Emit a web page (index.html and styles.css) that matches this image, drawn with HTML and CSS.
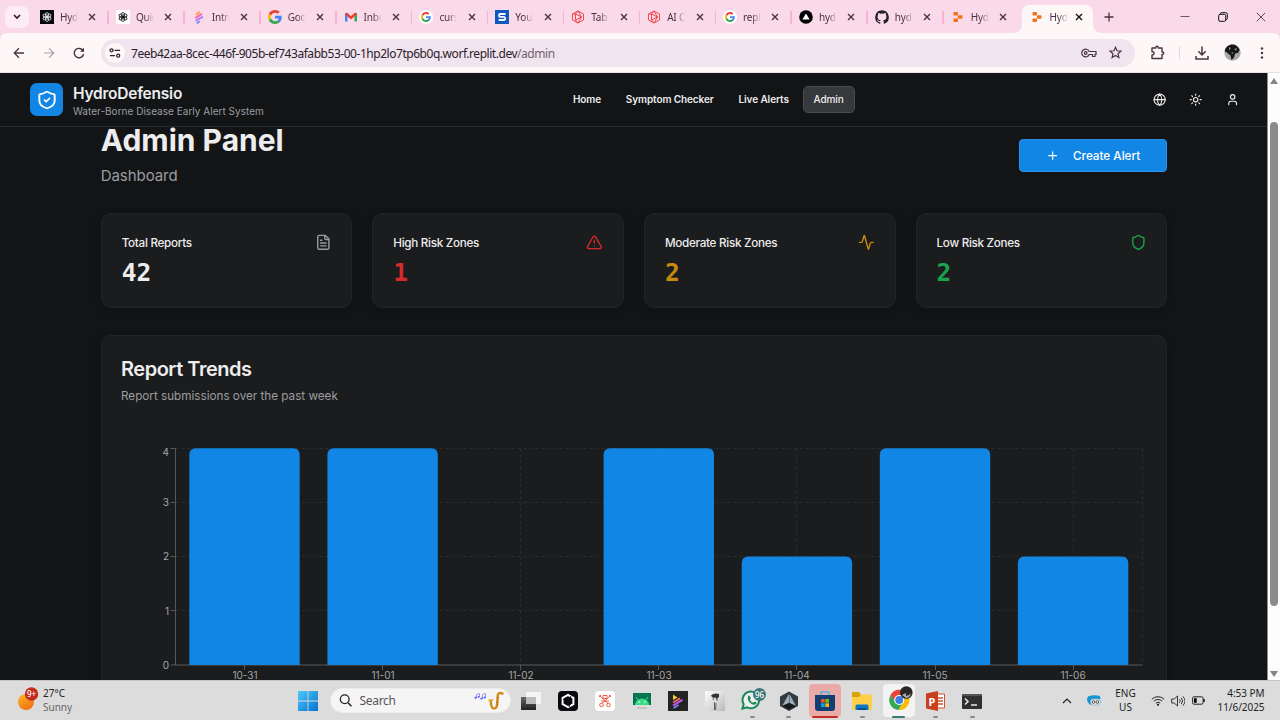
FILE: index.html
```
<!DOCTYPE html>
<html lang="en">
<head>
<meta charset="utf-8">
<title>HydroDefensio</title>
<link rel="stylesheet" href="styles.css">
</head>
<body>
<svg class="defs" width="0" height="0" aria-hidden="true">
  <defs>
    <symbol id="x" viewBox="0 0 8 8"><path d="M1 1l6 6M7 1L1 7" fill="none" stroke="currentColor" stroke-width="1.4"/></symbol>
    <symbol id="google" viewBox="0 0 48 48"><path fill="#ea4335" d="M24 9.500c3.500 0 6.700 1.200 9.200 3.600l6.900-6.900C35.900 2.400 30.500 0 24 0 14.600 0 6.500 5.400 2.600 13.200l8 6.200C12.400 13.700 17.700 9.500 24 9.500z"/><path fill="#4285f4" d="M47 24.600c0-1.600-.2-3.100-.4-4.600H24v9h12.900c-.6 3-2.300 5.500-4.800 7.200l7.700 6C44.400 38 47 31.800 47 24.600z"/><path fill="#fbbc05" d="M10.500 28.600c-.5-1.500-.8-3-.8-4.600s.3-3.100.8-4.600l-8-6.200C.9 16.500 0 20.100 0 24s.9 7.500 2.600 10.800z"/><path fill="#34a853" d="M24 48c6.500 0 11.900-2.100 15.900-5.800l-7.700-6c-2.200 1.500-4.900 2.300-8.200 2.300-6.300 0-11.600-4.200-13.500-9.900l-8 6.200C6.500 42.600 14.600 48 24 48z"/></symbol>
    <symbol id="knot" viewBox="0 0 16 16"><g fill="none" stroke="currentColor" stroke-width=".9"><ellipse cx="8" cy="5.500" rx="1.900" ry="2.600"/><ellipse cx="8" cy="5.500" rx="1.900" ry="2.600" transform="rotate(60 8 8)"/><ellipse cx="8" cy="5.500" rx="1.900" ry="2.600" transform="rotate(120 8 8)"/><ellipse cx="8" cy="5.500" rx="1.900" ry="2.600" transform="rotate(180 8 8)"/><ellipse cx="8" cy="5.500" rx="1.900" ry="2.600" transform="rotate(240 8 8)"/><ellipse cx="8" cy="5.500" rx="1.900" ry="2.600" transform="rotate(300 8 8)"/></g></symbol>
    <symbol id="stripes" viewBox="0 0 14 14"><g fill="none" stroke-linecap="round" stroke-width="2"><path stroke="#f9a43a" d="M4.500 4.200L7 2.400"/><path stroke="#ee6db0" d="M4 7.700l5.500-3.500"/><path stroke="#a978ff" d="M4.300 10.500l6-3.500"/><path stroke="#7b8cff" d="M5.500 12.800l1.500-1"/></g></symbol>
    <symbol id="hexplay" viewBox="0 0 14 14"><path fill="none" stroke="#f0484f" stroke-width="1" stroke-linejoin="round" d="M7 1l5.500 3v6L7 13l-5.500-3V4zM4.500 4v6l6-3zM1.500 4l3 0M7 1l3.500 6M7 13l3.500-6M4.500 10L7 13M4.500 4L7 1"/></symbol>
    <symbol id="replit" viewBox="0 0 14 14"><g fill="#f2711c"><rect x="2.500" y="2" width="4.500" height="3.400" rx=".7"/><rect x="6.800" y="5.300" width="4.700" height="3.400" rx=".7"/><rect x="2.500" y="8.600" width="4.500" height="3.400" rx=".7"/></g></symbol>
  </defs>
</svg>

<div class="screen">
  <div class="tabstrip">
    <div class="tab-search"><svg width="8" height="6" viewBox="0 0 8 6"><path d="M1 1l3 3 3-3" fill="none" stroke="#2a1c25" stroke-width="1.600"/></svg></div>
    <div class="tab"><span class="fav black"><svg><use href="#knot"/></svg></span><span class="label">Hyd</span><svg class="close"><use href="#x"/></svg></div>
    <div class="tab"><span class="fav white"><svg><use href="#knot"/></svg></span><span class="label">Quic</span><svg class="close"><use href="#x"/></svg></div>
    <div class="tab"><span class="fav"><svg><use href="#stripes"/></svg></span><span class="label">Intro</span><svg class="close"><use href="#x"/></svg></div>
    <div class="tab"><span class="fav"><svg><use href="#google"/></svg></span><span class="label">Goo</span><svg class="close"><use href="#x"/></svg></div>
    <div class="tab"><span class="fav"><svg viewBox="0 0 14 14"><path fill="#4285f4" d="M1 3h2.500v8.500H1z"/><path fill="#34a853" d="M10.500 3H13v8.500h-2.500z"/><path d="M2 3.500l5 4.200 5-4.200" fill="none" stroke="#ea4335" stroke-width="2.600"/></svg></span><span class="label">Inbo</span><svg class="close"><use href="#x"/></svg></div>
    <div class="tab"><span class="fav disc"><svg><use href="#google"/></svg></span><span class="label">curs</span><svg class="close"><use href="#x"/></svg></div>
    <div class="tab"><span class="fav"><svg viewBox="0 0 14 14"><path fill="#1159bd" d="M0 0h14v14H0z"/><path d="M10.500 4H5.300Q4 4 4 5.400T5.300 6.900h3.500Q10.200 6.900 10.200 8.500T8.800 10H3.700" fill="none" stroke="#fff" stroke-width="1.800"/></svg></span><span class="label">You</span><svg class="close"><use href="#x"/></svg></div>
    <div class="tab"><span class="fav"><svg><use href="#hexplay"/></svg></span><span class="label">Tabs</span><svg class="close"><use href="#x"/></svg></div>
    <div class="tab"><span class="fav"><svg><use href="#hexplay"/></svg></span><span class="label">AI C</span><svg class="close"><use href="#x"/></svg></div>
    <div class="tab"><span class="fav disc"><svg><use href="#google"/></svg></span><span class="label">repl</span><svg class="close"><use href="#x"/></svg></div>
    <div class="tab"><span class="fav"><svg viewBox="0 0 14 14"><circle cx="7" cy="7" r="6.800"/><path d="M7 3.400l3.600 6.200H3.400z" fill="#fff"/></svg></span><span class="label">hyd</span><svg class="close"><use href="#x"/></svg></div>
    <div class="tab"><span class="fav"><svg viewBox="0 0 16 16"><path fill="#24202a" d="M8 .2a8 8 0 0 0-2.500 15.500c.4.100.5-.2.500-.4v-1.500c-2.200.5-2.700-.9-2.700-.9-.4-.9-.9-1.200-.9-1.200-.7-.5.100-.5.100-.5.800.100 1.200.8 1.200.8.700 1.200 1.900.9 2.300.7.100-.5.300-.9.500-1.100-1.800-.2-3.600-.9-3.600-4 0-.9.300-1.600.8-2.100-.1-.2-.4-1 .1-2.100 0 0 .7-.2 2.200.8a7.500 7.500 0 0 1 4 0c1.500-1 2.200-.8 2.200-.8.400 1.100.2 1.900.1 2.100.5.600.8 1.300.8 2.100 0 3.100-1.900 3.700-3.700 3.900.3.300.6.800.6 1.500v2.300c0 .2.100.500.500.4A8 8 0 0 0 8 .2z"/></svg></span><span class="label">hyd</span><svg class="close"><use href="#x"/></svg></div>
    <div class="tab bare"><span class="fav"><svg><use href="#replit"/></svg></span><span class="label">Hyd</span><svg class="close"><use href="#x"/></svg></div>
    <div class="tab active"><span class="fav"><svg><use href="#replit"/></svg></span><span class="label">Hyd</span><svg class="close"><use href="#x"/></svg></div>
    <svg class="new-tab" viewBox="0 0 10 10"><path d="M5 .5v9M.5 5h9" stroke="#4a3341" stroke-width="1.300"/></svg>
    <div class="window-buttons">
      <svg viewBox="0 0 10 10"><path d="M.5 4.500h9" stroke="#6b5a64"/></svg>
      <svg viewBox="0 0 10 10"><path d="M2.500 2V1.500Q2.500.7 3.500.7h4.300q1.500 0 1.500 1.500v4.300q0 1-1 1H8" fill="none" stroke="#111"/><rect x=".7" y="2.300" width="7" height="7" rx="1.300" fill="none" stroke="#111"/></svg>
      <svg viewBox="0 0 10 10"><path d="M.8.8l8.400 8.400M9.200.8L.8 9.200" stroke="#4a3341" stroke-width=".9"/></svg>
    </div>
  </div>

  <div class="toolbar">
    <svg class="nav-icon" viewBox="0 0 12 12"><path d="M11 6H1.500M6 1.300L1.300 6 6 10.700" fill="none" stroke="#4a3341" stroke-width="1.300"/></svg>
    <svg class="nav-icon" viewBox="0 0 12 12"><path d="M1 6h9.500M6 1.300L10.700 6 6 10.700" fill="none" stroke="#a99fa5" stroke-width="1.200"/></svg>
    <svg class="nav-icon" viewBox="0 0 12 12"><path d="M10.300 4.200A4.700 4.700 0 1 0 10.600 7" fill="none" stroke="#4a3341" stroke-width="1.400"/><path d="M11 .8v4H7z" fill="#4a3341"/></svg>
    <div class="omnibox">
      <span class="site-info"><svg width="12" height="10" viewBox="0 0 12 10"><g fill="none" stroke="#33242e" stroke-width="1.300"><circle cx="2.500" cy="2.300" r="1.500"/><path d="M5.500 2.300H11M1 7.700h5"/><circle cx="9.200" cy="7.700" r="1.500"/></g></svg></span>
      <span class="url">7eeb42aa-8cec-446f-905b-ef743afabb53-00-1hp2lo7tp6b0q.worf.replit.dev<i>/admin</i></span>
      <svg class="key" viewBox="0 0 16 10"><g fill="none" stroke="#4a3341" stroke-width="1.200"><path d="M8.200 3.500H15v3h-1v2h-2.500v-2H8.200A3.900 3.900 0 1 1 8.200 3.500z"/><circle cx="4.700" cy="5" r="1.300"/></g></svg>
      <svg class="star" viewBox="0 0 12 12"><path d="M6 1.200l1.400 3.200 3.600.3-2.700 2.400.8 3.500L6 8.700l-3.100 1.900.8-3.500L1 4.700l3.600-.3z" fill="none" stroke="#4a3341" stroke-width="1.100"/></svg>
    </div>
    <svg class="puzzle" viewBox="0 0 15 15"><path d="M2 3h3.800V2.500a1.200 1.200 0 0 1 2.400 0V3H12v4h.5a1.200 1.200 0 0 1 0 2.400H12v4.100H2V10h.5a1.600 1.600 0 0 0 0-3.300H2z" fill="none" stroke="#4a3341" stroke-width="1.400" stroke-linejoin="round"/></svg>
    <span class="divider"></span>
    <svg class="download" viewBox="0 0 14 14"><path d="M7 .5v8.300M3.300 5.300L7 9l3.700-3.700M1 10v3h12v-3" fill="none" stroke="#4a3341" stroke-width="1.500"/></svg>
    <svg class="avatar" viewBox="0 0 17 17"><circle cx="8.500" cy="8.500" r="8.200" fill="#a9a9a9"/><path d="M.6 7Q2 1 8 .4q5.500 0 7.600 5.600l-1.600 3-3 .5-1 4-2.500 2.500-1-4.500-3-2.500z" fill="#161616"/><path d="M5 3l2 1-2 2.500zM10 5l3-1-1 3zM7 9l2-1v2z" fill="#8a8a8a"/></svg>
    <svg class="menu" viewBox="0 0 4 12"><g fill="#4a3341"><circle cx="2" cy="1.500" r="1.200"/><circle cx="2" cy="6" r="1.200"/><circle cx="2" cy="10.500" r="1.200"/></g></svg>
  </div>

  <div class="viewport">
    <div class="page">
      <header class="site-header">
        <div class="brand">
          <span class="logo"><svg viewBox="0 0 24 24" class="lucide"><path d="M20 13c0 5-3.500 7.500-7.660 8.950a1 1 0 0 1-.67-.01C7.500 20.500 4 18 4 13V6a1 1 0 0 1 1-1c2 0 4.500-1.200 6.240-2.720a1.170 1.170 0 0 1 1.520 0C14.510 3.810 17 5 19 5a1 1 0 0 1 1 1z" transform="matrix(1.150 0 0 1 -1.800 0)"/><path d="m9 12 2 2 4-4"/></svg></span>
          <div class="brand-text"><span class="brand-name">HydroDefensio</span><span class="brand-sub">Water-Borne Disease Early Alert System</span></div>
        </div>
        <nav class="site-nav"><a>Home</a><a>Symptom Checker</a><a>Live Alerts</a><a class="current">Admin</a></nav>
        <div class="header-icons">
          <svg class="lucide" viewBox="0 0 24 24"><circle cx="12" cy="12" r="10"/><path d="M12 2a14.500 14.500 0 0 0 0 20 14.500 14.500 0 0 0 0-20M2 12h20"/></svg>
          <svg class="lucide" viewBox="0 0 24 24"><circle cx="12" cy="12" r="4"/><path d="M12 2v2M12 20v2M4.930 4.930l1.410 1.410M17.660 17.660l1.410 1.410M2 12h2M20 12h2M6.340 17.660l-1.410 1.410M19.070 4.930l-1.410 1.410"/></svg>
          <svg class="lucide" viewBox="0 0 24 24"><path d="M19 21v-2a4 4 0 0 0-4-4H9a4 4 0 0 0-4 4v2"/><circle cx="12" cy="7" r="4"/></svg>
        </div>
      </header>
      <main>
        <div class="title-row">
          <div><h1>Admin Panel</h1><p>Dashboard</p></div>
          <button class="create"><svg class="lucide" viewBox="0 0 24 24"><path d="M5 12h14M12 5v14"/></svg><span>Create Alert</span></button>
        </div>
        <section class="stats">
          <article class="card stat"><div class="stat-head"><h3>Total Reports</h3><svg class="lucide muted" viewBox="0 0 24 24"><path d="M15 2H6a2 2 0 0 0-2 2v16a2 2 0 0 0 2 2h12a2 2 0 0 0 2-2V7zM14 2v4a2 2 0 0 0 2 2h4M10 9H8M16 13H8M16 17H8"/></svg></div><strong>42</strong></article>
          <article class="card stat red"><div class="stat-head"><h3>High Risk Zones</h3><svg class="lucide" viewBox="0 0 24 24"><path d="m21.730 18-8-14a2 2 0 0 0-3.480 0l-8 14A2 2 0 0 0 4 21h16a2 2 0 0 0 1.730-3M12 9v4M12 17h.01"/></svg></div><strong>1</strong></article>
          <article class="card stat amber"><div class="stat-head"><h3>Moderate Risk Zones</h3><svg class="lucide" viewBox="0 0 24 24"><path d="M22 12h-2.480a2 2 0 0 0-1.930 1.460l-2.350 8.360a.25.25 0 0 1-.48 0L9.240 2.180a.25.25 0 0 0-.48 0l-2.350 8.360A2 2 0 0 1 4.490 12H2"/></svg></div><strong>2</strong></article>
          <article class="card stat green"><div class="stat-head"><h3>Low Risk Zones</h3><svg class="lucide" viewBox="0 0 24 24"><path d="M20 13c0 5-3.500 7.500-7.660 8.950a1 1 0 0 1-.67-.01C7.500 20.500 4 18 4 13V6a1 1 0 0 1 1-1c2 0 4.500-1.200 6.240-2.720a1.170 1.170 0 0 1 1.520 0C14.510 3.810 17 5 19 5a1 1 0 0 1 1 1z"/></svg></div><strong>2</strong></article>
        </section>
        <section class="card trends">
          <h2>Report Trends</h2>
          <p>Report submissions over the past week</p>
          <svg class="chart" viewBox="0 0 1026 260" width="1026" height="260">
            <g class="grid"><path d="M54.500 18.500H1021.500M54.500 72.500H1021.500M54.500 126.500H1021.500M54.500 180.500H1021.500M123.500 18.500V235M261.500 18.500V235M399.500 18.500V235M537.500 18.500V235M675.500 18.500V235M814.500 18.500V235M952.500 18.500V235M1021.500 18.500V235"/></g>
            <g class="axis"><path d="M54.500 18V235M49.500 18.500h5M49.500 72.500h5M49.500 126.500h5M49.500 180.500h5M49.500 235h972M123.500 235v5M261.500 235v5M399.500 235v5M537.500 235v5M675.500 235v5M814.500 235v5M952.500 235v5"/></g>
            <g class="bars"><path d="M68.300 235V25q0-6.700 6.700-6.700h97q6.700 0 6.700 6.700V235z"/><path d="M206.400 235V25q0-6.700 6.700-6.700h97q6.700 0 6.700 6.700V235z"/><path d="M482.600 235V25q0-6.700 6.700-6.700h97q6.700 0 6.700 6.700V235z"/><path d="M620.700 235V133.300q0-6.700 6.700-6.700h97q6.700 0 6.700 6.700V235z"/><path d="M758.800 235V25q0-6.700 6.700-6.700h97q6.700 0 6.700 6.700V235z"/><path d="M896.900 235V133.300q0-6.700 6.700-6.700h97q6.700 0 6.700 6.700V235z"/></g>
            <g class="ticks end"><text x="48" y="25.500">4</text><text x="48" y="76.300">3</text><text x="48" y="130.400">2</text><text x="48" y="184.500">1</text><text x="48" y="239">0</text></g>
            <g class="ticks mid"><text x="124" y="248.500">10-31</text><text x="262" y="248.500">11-01</text><text x="400" y="248.500">11-02</text><text x="538" y="248.500">11-03</text><text x="676" y="248.500">11-04</text><text x="814" y="248.500">11-05</text><text x="952" y="248.500">11-06</text></g>
          </svg>
        </section>
      </main>
    </div>
    <div class="scrollbar"><svg width="8" height="6" viewBox="0 0 8 6"><path d="M4 0l4 6H0z" fill="#858585"/></svg><span class="thumb"></span><svg class="down" width="8" height="6" viewBox="0 0 8 6"><path d="M0 0h8L4 6z" fill="#858585"/></svg></div>
  </div>

  <div class="taskbar">
    <div class="weather">
      <svg width="21" height="24" viewBox="0 0 21 24"><defs><linearGradient id="sun" x2=".6" y2="1"><stop stop-color="#fdb827"/><stop offset="1" stop-color="#ef7414"/></linearGradient></defs><circle cx="8" cy="15" r="8" fill="url(#sun)"/><circle cx="13.500" cy="7" r="6.700" fill="#c42b1c"/><text x="13.500" y="10" class="badge-text">9+</text></svg>
      <div class="weather-text"><span>27°C</span><span class="dim">Sunny</span></div>
    </div>
    <svg class="start" viewBox="0 0 20 20"><defs><linearGradient id="win" x2="1" y2="1"><stop stop-color="#4fc8f8"/><stop offset="1" stop-color="#0572d0"/></linearGradient></defs><path fill="url(#win)" d="M0 0h9.600v9.600H0zM10.400 0H20v9.600h-9.600zM0 10.400h9.600V20H0zM10.400 10.400H20V20h-9.600z"/></svg>
    <div class="search"><svg width="13" height="13" viewBox="0 0 13 13"><circle cx="5.700" cy="5.300" r="4.400" fill="none" stroke="#222" stroke-width="1.300"/><path d="M9 8.700l3.500 3.600" stroke="#222" stroke-width="1.500"/></svg><span>Search</span>
      <svg class="sax" width="32" height="20" viewBox="0 0 32 20"><g fill="none" stroke="#7f86f6" stroke-width=".8"><path d="M3.500 6.500V3.500l3-1v3M9.500 7V3.500l3-1V6"/></g><g fill="#5b5cf6"><ellipse cx="2.700" cy="6.700" rx="1.300" ry="1"/><ellipse cx="5.700" cy="5.800" rx="1.200" ry=".9"/><ellipse cx="8.600" cy="7.400" rx="1.300" ry="1"/><ellipse cx="11.700" cy="6.500" rx="1.200" ry=".9"/></g><path d="M30.500 3q-5.500-2.500-5.800 1.500l-.6 9q-.3 4-3 4t-3-4.500l-.4-3" fill="none" stroke="#d08b17" stroke-width="2.400"/><path d="M15.500 9.500l4.500-.7" stroke="#e9a72c" stroke-width="1.800"/><path d="M25.200 6l-.6 8" stroke="#8c5208" stroke-dasharray="1 1.500"/></svg></div>
    <div class="apps">
      <div class="app"><svg viewBox="0 0 20 20"><defs><linearGradient id="deck" y2="1" x2="0"><stop stop-color="#666"/><stop offset="1" stop-color="#222"/></linearGradient></defs><path fill="url(#deck)" d="M0 6h15v13H0z"/><path fill="#f4f4f4" d="M5 1h15v12H5z"/><path fill="#bbb" d="M5 6h10v7H5z"/></svg></div>
      <div class="app"><svg viewBox="0 0 20 20"><rect width="20" height="20" rx="4" fill="#080a0d"/><path d="M10 3.800l5.400 3.100v6.200L10 16.200l-5.400-3.100V6.900z" fill="none" stroke="#fff" stroke-width="2"/><path d="M8 7l-3 2M12 13l-1 3M13 5l-1 3" stroke="#080a0d"/></svg></div>
      <div class="app"><svg viewBox="0 0 20 20"><rect width="20" height="20" rx="4" fill="#fff"/><g fill="none" stroke="#ea4b35" stroke-width=".9"><path d="M5 5l8 7.500M15 5l-8 7.500M4.500 6V4.500H6M15.500 6V4.500H14M8 4.500h4v3H8zM6 10h8"/><circle cx="6.500" cy="14" r="1.800"/><circle cx="13.500" cy="14" r="1.800"/></g></svg></div>
      <div class="app"><svg viewBox="0 0 20 20"><path fill="#067452" d="M1 2h18v12H1z"/><path fill="#3ddc84" d="M3 14a7 6.500 0 0 1 14 0z"/><circle cx="7" cy="11" r=".8" fill="#fff"/><circle cx="13" cy="11" r=".8" fill="#fff"/><path d="M4 6l2 3M16 6l-2 3" stroke="#3ddc84"/><path fill="#c3c3c3" d="M5 16h10v2H5z"/></svg></div>
      <div class="app"><svg viewBox="0 0 20 20"><path fill="#242424" d="M0 0h20v20H0z"/><g fill="none" stroke-width="2"><path fill="#fdc830" stroke="none" d="M5 3.500L9.500 6.500 5 9z"/><path stroke="#f26a58" d="M5 11.500L12 7.300"/><path stroke="#c45cf0" d="M5 14.500l9.500-5.600"/><path stroke="#7185ff" d="M5.500 17l5-3"/></g></svg></div>
      <div class="app"><svg viewBox="0 0 20 20"><defs><linearGradient id="silver" x2="1" y2="1"><stop stop-color="#fff"/><stop offset="1" stop-color="#b9b9b9"/></linearGradient></defs><rect width="20" height="20" rx="1" fill="url(#silver)"/><path d="M6 4.500q3-3 8-1.500v3l-1.500 1v2.500h-1l-.5-3q-4 1-5-2z" fill="#343434"/><path d="M9.500 6q-1.500 0-1.500 3M9.500 11v8M11 12l-.5 7" stroke="#444" fill="none" stroke-width=".8"/></svg></div>
      <div class="app run"><svg class="wa" viewBox="0 0 26 22"><path d="M1.500 20.500l1.200-4.300A8.300 8.300 0 1 1 6 19.300z" fill="#eee" stroke="#168756" stroke-width="2"/><path d="M7 8.500q1-2 2 0l.8 2-1 1q1 2.500 3.500 3.300l1-1q3 .3 2 2-2 1.700-5 0-4.300-2.800-3.300-7.300z" fill="#168756"/><circle cx="18.500" cy="6.500" r="6.500" fill="#3c7a78"/><text x="18.500" y="9.500" class="badge-text">96</text></svg></div>
      <div class="app run"><svg viewBox="0 0 20 20"><path fill="#343b40" d="M10 .5l9 5v9.500l-9 5-9-5V5.500z"/><path fill="#9eafb9" d="M10.500 3v9L17 15zM10 3L3 15l7-3z"/><path fill="#14191c" d="M3 15l7-3 7 3-7 3.500z"/></svg></div>
      <div class="app store"><svg viewBox="0 0 20 20"><path d="M6 5V1h8v4" fill="none" stroke="#56b5e6" stroke-width="1.500"/><path fill="#123e73" d="M0 4h20v13q0 3-3 3H3q-3 0-3-3z"/><path fill="#f25022" d="M6 8h3.700v3.700H6z"/><path fill="#7fba00" d="M10.300 8H14v3.700h-3.700z"/><path fill="#00a4ef" d="M6 12.300h3.700V16H6z"/><path fill="#ffb900" d="M10.300 12.300H14V16h-3.700z"/></svg></div>
      <div class="app run"><svg viewBox="0 0 20 20"><path fill="#dca000" d="M0 2q0-1 1-1h6l2 3v5H0z"/><path fill="#ffcf48" d="M0 6h7l2-2.500h10q1 0 1 1V18q0 1-1 1H1q-1 0-1-1z"/><path fill="#0a78c9" d="M3.500 19v-4q0-1.500 1.500-1.500h10q1.500 0 1.500 1.500v4z"/><path fill="#074e89" d="M6 17h8v2H6z"/></svg></div>
      <div class="app chrome"><svg viewBox="0 0 24 24"><path fill="#ea4335" d="M1.500 9A10 10 0 0 1 19 9h-9l-4 7z"/><path fill="#34a853" d="M1.500 9A10 10 0 0 0 9.500 24l4-7-7-1z"/><path fill="#fbbc05" d="M19 9a10 10 0 0 1-9.500 15l5-8L13 9z"/><circle cx="10.200" cy="14" r="5" fill="#fff"/><circle cx="10.200" cy="14" r="3.900" fill="#3c7ee8"/><circle cx="17.300" cy="6.500" r="6.300" fill="#272727"/><path d="M13 9l4-2v3q3 0 5-3-1 5-5 5z" fill="#aaa"/></svg></div>
      <div class="app run"><svg viewBox="0 0 20 20"><path fill="#fff" stroke="#d35230" d="M9 3h9.500v14H9z"/><path d="M12 7h5M12 10h5M12 13h5" stroke="#d35230" stroke-width="1.400"/><path fill="#c9401f" d="M0 2.500L12 0v20L0 17.500z"/><text x="2.500" y="14.500" class="ppt-letter">P</text></svg></div>
      <div class="app run"><svg viewBox="0 0 20 20"><path fill="#303030" d="M0 3h20v14q0 1-1 1H1q-1 0-1-1z"/><path fill="#555" d="M0 3h20v2H0z"/><path d="M3 7.500l3 3-3 3M9 14h6" fill="none" stroke="#e5e5e5" stroke-width="1.600"/></svg></div>
    </div>
    <div class="tray">
      <svg class="chev" viewBox="0 0 10 6"><path d="M1 5l4-4 4 4" fill="none" stroke="#222" stroke-width="1.200"/></svg>
      <svg class="glasses" viewBox="0 0 14 11"><path fill="#1696d2" d="M1 1.500Q7-.5 13 1l.5 3H4v6Q0 8 0 4z"/><rect x="3.500" y="4" width="10" height="6" rx="3" fill="#eee" stroke="#78a9c2" stroke-width=".7"/><circle cx="6.600" cy="7" r="1.400" fill="none" stroke="#333" stroke-width=".8"/><circle cx="10.400" cy="7" r="1.400" fill="none" stroke="#333" stroke-width=".8"/></svg>
      <div class="lang"><span>ENG</span><span>US</span></div>
      <svg class="wifi" viewBox="0 0 14 11"><g fill="none" stroke="#222"><path d="M.8 4.200a9 9 0 0 1 12.400 0M2.800 6.200a6 6 0 0 1 8.400 0M4.800 8.200a3.200 3.200 0 0 1 4.400 0"/></g><circle cx="7" cy="9.700" r="1"/></svg>
      <svg class="vol" viewBox="0 0 14 12"><path d="M.7 4h2.500L6.500 1v10L3.200 8H.7zM8.500 4.300q1.500 1.700 0 3.400M10.200 2.800q3 3.200 0 6.400M11.800 1.300q4.500 4.700 0 9.400" fill="none" stroke="#222" stroke-width=".9"/></svg>
      <svg class="batt" viewBox="0 0 13 9"><rect x=".6" y=".8" width="10.500" height="7.400" rx="1.500" fill="none" stroke="#222"/><path d="M2 2.200h2.700v4.600H2zM11.500 3h1.200v3h-1.200z"/></svg>
      <div class="clock"><span>4:53 PM</span><span>11/6/2025</span></div>
    </div>
  </div>
</div>
</body>
</html>
```
FILE: styles.css
```
* { box-sizing: border-box; }
body { margin: 0; overflow: hidden; }
svg { display: block; flex: none; }
h1, h2, h3, p { margin: 0; }
.defs { position: absolute; }
.screen { width: 1280px; height: 720px; display: grid; grid-template-rows: 33px 40px 607px 40px; overflow: hidden; font-family: "Noto Sans", sans-serif; }

/* browser tabs */
.tabstrip { display: flex; align-items: center; background: #fad9e9; padding-left: 5px; }
.tab-search { width: 24px; height: 22px; border-radius: 7px; background: #fdecf4; display: grid; place-items: center; margin-right: 3px; }
.tab { width: 75.900px; height: 28px; display: flex; align-items: center; padding: 0 11.500px 0 8px; color: #4a3341; position: relative; flex: none; }
.tab::after { content: ""; position: absolute; right: -1px; top: 8px; width: 1.500px; height: 13px; background: #f7b3d7; }
.tab.bare::after, .tab.active::after { display: none; }
.fav { width: 14px; height: 14px; flex: none; display: grid; place-items: center; }
.fav svg { width: 14px; height: 14px; }
.fav.black { background: #050505; color: #e8e8e8; }
.fav.white { background: #fff; color: #111; }
.fav.disc { background: #fff; border-radius: 50%; }
.fav.disc svg { width: 10px; height: 10px; }
.label { width: 18px; margin-left: 6px; overflow: hidden; white-space: nowrap; font-size: 10px; letter-spacing: -.2px; line-height: 16px; -webkit-mask-image: linear-gradient(90deg, #000 50%, transparent); mask-image: linear-gradient(90deg, #000 50%, transparent); }
.close { width: 8px; height: 8px; margin-left: auto; }
.tab.active { height: 28px; align-self: flex-end; background: #fef7f8; width: 71px; margin-left: 3px; border-radius: 7px 7px 0 0; padding: 0 10px 5px 8px; }
.tab.active::before { content: ""; position: absolute; left: -8px; right: -8px; bottom: 0; height: 8px; background: radial-gradient(circle at 0 0, transparent 7.500px, #fef7f8 8px) left / 8px 8px no-repeat, radial-gradient(circle at 100% 0, transparent 7.500px, #fef7f8 8px) right / 8px 8px no-repeat; }
.tab.active .close { color: #111; }
.new-tab { width: 10px; height: 10px; margin-left: 11.500px; }
.window-buttons { display: flex; margin-left: auto; gap: 28px; padding-right: 14px; }
.window-buttons svg { width: 10px; height: 10px; }

/* browser toolbar */
.toolbar { display: flex; align-items: center; background: #fef7f8; border-radius: 7px 7px 0 0; border-bottom: 1px solid #eadfe5; padding: 0 16px 0 13px; }
.screen { background: #fad9e9; }
.nav-icon { width: 12px; height: 12px; margin-right: 18px; }
.omnibox { width: 1034px; height: 28px; margin-left: -2px; border-radius: 14px; background: #f0e4ee; display: flex; align-items: center; padding: 0 14px 0 4px; }
.site-info { width: 20px; height: 20px; border-radius: 50%; background: #fef7f8; display: grid; place-items: center; margin-right: 6px; }
.url { font-size: 12px; color: #2b2029; white-space: nowrap; letter-spacing: -.46px; padding-top: 1px; }
.url i { font-style: normal; color: #71636d; }
.key { width: 16px; height: 10px; margin-left: auto; }
.star { width: 13px; height: 13px; margin-left: 12px; margin-right: -1px; }
.puzzle { width: 15px; height: 15px; margin-left: 15px; }
.divider { width: 1px; height: 13px; background: #f9cde3; margin-left: 13.500px; }
.download { width: 14px; height: 14px; margin-left: 15.500px; }
.avatar { width: 17px; height: 17px; margin-left: 14.500px; }
.menu { width: 4px; height: 12px; margin-left: auto; }

/* web page */
.viewport { display: grid; grid-template-columns: 1267px 13px; overflow: hidden; background: #131416; }
.page { font-family: Inter, sans-serif; color: #ededee; height: 607px; overflow: hidden; }
.lucide { fill: none; stroke: currentColor; stroke-width: 2; stroke-linecap: round; stroke-linejoin: round; }
.site-header { height: 54px; display: grid; grid-template-columns: 532px 1fr auto; align-items: center; padding: 0 19px 0 30px; border-bottom: 1px solid #292a2c; }
.brand { display: flex; align-items: center; gap: 10px; }
.logo { width: 33px; height: 33px; border-radius: 7px; background: #1286e4; display: grid; place-items: center; }
.logo svg { width: 20px; height: 20px; color: #fff; }
.brand-text { display: flex; flex-direction: column; padding-top: 5px; }
.brand-name { font-size: 15.500px; line-height: 18px; font-weight: 600; letter-spacing: -.23px; }
.brand-sub { font-size: 10px; line-height: 16px; color: #9b9da0; letter-spacing: .02px; }
.site-nav { display: flex; gap: 3px; font-size: 10px; font-weight: 600; letter-spacing: -.09px; }
.site-nav a { height: 27px; display: flex; align-items: center; padding: 0 9.900px 1px; border: 1px solid transparent; border-radius: 5px; white-space: nowrap; }
.site-nav a.current { background: #36383b; border-color: #4a4c4f; font-weight: 500; }
.header-icons { display: flex; gap: 23.500px; padding-right: 8.500px; }
.header-icons svg { width: 13.300px; height: 13.300px; }
main { width: 1066.500px; margin-left: 100.700px; }
.title-row { height: 86px; display: flex; justify-content: space-between; align-items: flex-start; }
h1 { font-size: 30px; line-height: 27px; font-weight: 700; white-space: nowrap; }
.title-row p { font-size: 15px; line-height: 20px; margin-top: 12px; color: #9b9da0; letter-spacing: -.05px; }
.create { font: 500 11.700px Inter, sans-serif; width: 148.500px; height: 33px; margin-top: 12px; background: #1286e4; border: 1px solid #2b92e7; border-radius: 4px; color: #fff; display: flex; align-items: center; justify-content: center; gap: 14px; }
.create svg { width: 13.300px; height: 13.300px; }
.stats { display: grid; grid-template-columns: repeat(4, 1fr); gap: 20px; }
.card { background: #1b1c1d; border: 1px solid #222325; border-radius: 10px; box-shadow: 0 2px 6px #0d0e0f66; }
.stat { height: 95px; padding: 19px 20px; }
.stat-head { display: flex; justify-content: space-between; align-items: center; height: 20px; }
.stat-head svg { width: 16.700px; height: 16.700px; margin-top: -1px; }
h3 { font-size: 11.700px; font-weight: 500; line-height: 17px; letter-spacing: -.3px; }
.stat strong { display: block; font: 700 24.500px/30px "DejaVu Sans Mono", monospace; margin-top: 5px; }
.muted { color: #9b9da0; }
.red svg, .red strong { color: #d52b2b; }
.amber svg, .amber strong { color: #c78a0c; }
.green svg, .green strong { color: #1ba04b; }
.trends { margin-top: 27px; height: 400px; padding: 20px 19.300px; }
h2 { font-size: 20px; line-height: 27px; font-weight: 600; letter-spacing: -.48px; }
.trends p { font-size: 11.700px; line-height: 17px; margin-top: 5px; color: #9b9da0; }
.chart { margin-top: 25px; }
.grid { fill: none; stroke: #2b2d2e; stroke-dasharray: 3 3; }
.axis { fill: none; stroke: #56585a; }
.bars { fill: #1286e4; }
.ticks { font-size: 10px; fill: #a3a5a8; }
.end { text-anchor: end; }
.mid { text-anchor: middle; }
.scrollbar { background: #fdfdfd; border-left: 1px solid #8d8d8d; display: flex; flex-direction: column; align-items: center; padding: 5px 0 3px; }
.thumb { width: 8px; height: 484px; border-radius: 4px; background: #8b8b8b; margin-top: 38px; }
.down { margin-top: auto; }

/* desktop taskbar */
.taskbar { display: grid; grid-template-columns: 277.500px 20px 12px 181px 2.500px 477px 1fr; align-items: center; padding-left: 20px; background: #dcdcdd; border-top: 1px solid #c3c3c5; }
.weather { display: flex; align-items: center; }
.weather svg { margin: -3px 4px 0 -2px; }
.weather-text, .lang, .clock { display: flex; flex-direction: column; font-size: 10px; line-height: 13.500px; color: #222; white-space: nowrap; }
.dim { color: #666; }
.badge-text { font-size: 8px; fill: #fff; text-anchor: middle; font-weight: 500; }
.start { width: 20px; height: 20px; }
.search { grid-column: 4; height: 25px; border-radius: 13px; background: #f5f5f6; border: 1px solid #ececee; display: flex; align-items: center; padding: 0 5px 0 8px; font-size: 12px; letter-spacing: -.3px; color: #555; }
.search span { margin-left: 8px; }
.sax { margin-left: auto; }
.apps { grid-column: 6; display: flex; }
.app { width: 36.750px; height: 33px; flex: none; display: grid; place-items: center; position: relative; border-radius: 4px; }
.app svg { width: 20px; height: 20px; }
.app .wa { width: 26px; height: 22px; margin-left: 4px; margin-bottom: 3px; }
.run::after, .store::after, .chrome::after { content: ""; position: absolute; bottom: -1px; left: 16px; width: 5px; height: 2px; border-radius: 1px; background: #8a8a8a; }
.app.store { width: 32px; margin: 0 2.380px; background: #eaaaa7; }
.app.store::after { left: 3px; width: 26px; background: #c42b1c; }
.app.chrome { width: 32px; margin: 0 2.380px; background: #f3f3f4; }
.app.chrome svg { width: 24px; height: 24px; margin-bottom: 5px; margin-left: 4px; }
.app.chrome::after { left: 9px; width: 13px; background: #3c7a78; }
.ppt-letter { font-size: 11px; font-weight: 700; fill: #fff; }
.tray { display: flex; align-items: center; justify-content: flex-end; padding-right: 15.500px; }
.chev { width: 10px; height: 6px; margin-right: 15px; }
.glasses { width: 14px; height: 11px; margin-right: 15px; }
.lang { align-items: center; margin-right: 15px; width: 20px; }
.wifi { width: 14px; height: 11px; margin-right: 6px; }
.vol { width: 14px; height: 12px; margin-right: 7px; }
.batt { width: 13px; height: 9px; }
.clock { align-items: flex-end; width: 60px; letter-spacing: -.05px; }
```
